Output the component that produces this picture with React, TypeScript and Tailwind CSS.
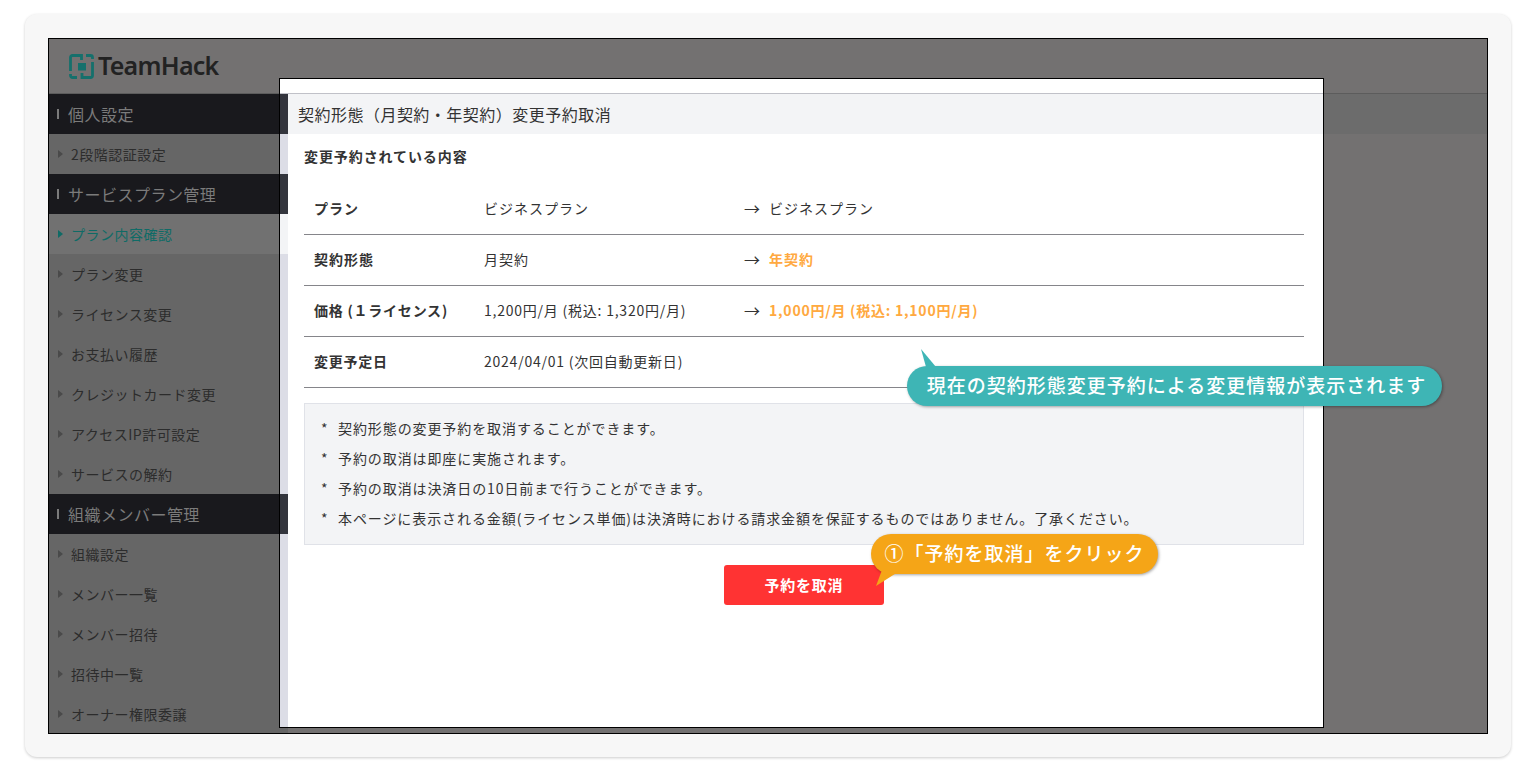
import type { ReactNode } from 'react';

const jp = "font-['Noto_Sans_CJK_JP','Noto_Sans',sans-serif]";

type NavEntry = { label: string; kind: 'section' | 'item' | 'active' };

const NAV: NavEntry[] = [
  { label: '個人設定', kind: 'section' },
  { label: '2段階認証設定', kind: 'item' },
  { label: 'サービスプラン管理', kind: 'section' },
  { label: 'プラン内容確認', kind: 'active' },
  { label: 'プラン変更', kind: 'item' },
  { label: 'ライセンス変更', kind: 'item' },
  { label: 'お支払い履歴', kind: 'item' },
  { label: 'クレジットカード変更', kind: 'item' },
  { label: 'アクセスIP許可設定', kind: 'item' },
  { label: 'サービスの解約', kind: 'item' },
  { label: '組織メンバー管理', kind: 'section' },
  { label: '組織設定', kind: 'item' },
  { label: 'メンバー一覧', kind: 'item' },
  { label: 'メンバー招待', kind: 'item' },
  { label: '招待中一覧', kind: 'item' },
  { label: 'オーナー権限委譲', kind: 'item' },
];

const NOTES = [
  '契約形態の変更予約を取消することができます。',
  '予約の取消は即座に実施されます。',
  '予約の取消は決済日の10日前まで行うことができます。',
  '本ページに表示される金額(ライセンス単価)は決済時における請求金額を保証するものではありません。了承ください。',
];

function Logo() {
  return (
    <svg width="25" height="25" viewBox="0 0 25 25" className="shrink-0">
      <g fill="none" stroke="#15706c" strokeWidth="2.800">
        <path d="M1.500 17V3.500a2 2 0 0 1 2-2H12.500V6" />
        <path d="M17 1.500h4.500a2 2 0 0 1 2 2V5" />
        <path d="M23.500 8v13.500a2 2 0 0 1-2 2H13V19" />
        <path d="M8 23.500H3.500a2 2 0 0 1-2-2V20" />
      </g>
      <rect x="9" y="9" width="8" height="7.500" fill="#15706c" />
    </svg>
  );
}

function NavRow({ entry }: { entry: NavEntry }) {
  if (entry.kind === 'section') {
    return (
      <div className="flex h-10 shrink-0 items-center bg-[#19191d] pl-2 text-base tracking-[0.03em] text-[#7b7b7b]">
        <span className="mr-2 h-2.5 w-0.5 bg-[#7b7b7b]" />
        <span className="pl-[1px]">{entry.label}</span>
      </div>
    );
  }
  const active = entry.kind === 'active';
  return (
    <div
      className={`flex h-10 shrink-0 items-center pb-px pl-[9px] text-sm tracking-[0.035em] ${
        active ? 'bg-[#717171] text-[#0f6b66]' : 'bg-[#666666] text-[#2c2c2c]'
      }`}
    >
      <span
        className={`mr-[8px] h-0 w-0 border-y-[4.500px] border-l-[5px] border-y-transparent ${
          active ? 'border-l-[#0f6b66]' : 'border-l-[#4a4a4a]'
        }`}
      />
      {entry.label}
    </div>
  );
}

function Row({
  label,
  from,
  to,
  highlight,
  mixed,
  last,
}: {
  label: string;
  from: string;
  to?: string;
  highlight?: boolean;
  mixed?: boolean;
  last?: boolean;
}) {
  return (
    <div
      className={`flex h-[51px] items-center border-b border-[#85858a] pb-0.5 pl-2.5 text-sm text-[#333333] ${
        mixed ? 'tracking-[0.055em]' : 'tracking-[0.07em]'
      }`}
    >
      <div className="w-[170px] font-bold">{label}</div>
      <div className="w-[260px]">{from}</div>
      {!last && (
        <div className="flex items-center">
          <span className="w-[25px] text-base tracking-normal">→</span>
          <span className={highlight ? 'font-bold text-[#ffa940]' : ''}>{to}</span>
        </div>
      )}
    </div>
  );
}

function Bubble({ className, children }: { className: string; children: ReactNode }) {
  return (
    <div
      className={`absolute z-10 flex h-10 items-center justify-center rounded-[20px] pb-0.5 text-[19px] font-medium tracking-[1px] whitespace-nowrap text-white shadow-[1px_1px_3px_rgba(0,0,0,0.35)] ${className}`}
    >
      {children}
    </div>
  );
}

export default function App() {
  const strip = [
    'bg-[#33353d] h-10',
    'bg-[#dcdde6] h-10',
    'bg-[#33353d] h-10',
    'bg-[#f3f4f6] h-10',
    'bg-[#dcdde6] h-[240px]',
    'bg-[#33353d] h-10',
    'bg-[#dcdde6] flex-1',
  ];

  return (
    <div className={`h-[771px] w-[1536px] overflow-hidden bg-white pt-3.5 pl-[25px] ${jp}`}>
      <div className="h-[743px] w-[1486px] rounded-xl bg-[#f7f7f7] px-[23px] pt-6 shadow-[0_1px_3px_rgba(0,0,0,0.2)]">
        {/* dimmed app behind the modal */}
        <div className="relative flex h-[696px] w-[1440px] flex-col overflow-hidden border border-black bg-[#737171]">
          <div className="flex h-[55px] shrink-0 items-center gap-[4px] border-b border-[#5c5c5c] pl-5">
            <Logo />
            <span className="font-['Noto_Sans',sans-serif] text-[25px] font-semibold tracking-[-0.03em] text-[#222222]">
              TeamHack
            </span>
          </div>
          <div className="flex min-h-0 flex-1">
            <div className="flex w-[239px] shrink-0 flex-col overflow-hidden">
              {NAV.map(n => (
                <NavRow key={n.label} entry={n} />
              ))}
            </div>
            <div className="h-10 flex-1 bg-[#6c6c6c]" />
          </div>

          {/* highlighted modal */}
          <div className="absolute top-[39px] left-[230px] flex h-[650px] w-[1045px] flex-col border border-black bg-white">
            <div className="h-[15px] shrink-0 border-b border-[#c0c1c8]" />
            <div className="flex min-h-0 flex-1">
              <div className="flex w-2 shrink-0 flex-col">
                {strip.map((c, i) => (
                  <div key={i} className={c} />
                ))}
              </div>
              <div className="flex min-w-0 flex-1 flex-col">
                <div className="flex h-10 items-center bg-[#f3f4f6] pl-2.5 text-base tracking-[0.03em] text-[#333333]">
                  契約形態（月契約・年契約）変更予約取消
                </div>
                <div className="pr-[19px] pl-4">
                  <div className="flex h-[50px] items-start pt-3 text-sm font-bold tracking-[0.065em] text-[#333333]">
                    変更予約されている内容
                  </div>
                  <Row label="プラン" from="ビジネスプラン" to="ビジネスプラン" />
                  <Row label="契約形態" from="月契約" to="年契約" highlight />
                  <Row
                    label="価格 (１ライセンス)"
                    from="1,200円/月 (税込: 1,320円/月)"
                    to="1,000円/月 (税込: 1,100円/月)"
                    highlight
                    mixed
                  />
                  <Row label="変更予定日" from="2024/04/01 (次回自動更新日)" mixed last />
                  <div className="mt-[15px] flex h-[142px] flex-col justify-center border border-[#e0e2e8] bg-[#f3f4f6] pb-0.5 pl-4">
                    {NOTES.map(n => (
                      <div key={n} className="flex h-[30px] items-center text-sm tracking-[0.065em] text-[#333333]">
                        <span className="w-[17px]">*</span>
                        {n}
                      </div>
                    ))}
                  </div>
                  <div className="mt-5 flex justify-center">
                    <div className="flex h-10 w-40 items-center justify-center rounded-[3px] bg-[#ff3333] text-[15px] font-bold tracking-[0.05em] text-white">
                      予約を取消
                    </div>
                  </div>
                </div>
              </div>
            </div>
          </div>

          <Bubble className="top-[327px] left-[858px] w-[535px] bg-[#3eb5b5] pl-1">
            <svg width="20" height="20" viewBox="0 0 20 20" className="absolute top-[-17px] left-[12px]">
              <path d="M2 0L7 18H17Z" fill="#3eb5b5" />
            </svg>
            現在の契約形態変更予約による変更情報が表示されます
          </Bubble>
          <Bubble className="top-[495px] left-[822px] w-[287px] bg-[#f5a517]">
            <svg width="30" height="20" viewBox="0 0 30 20" className="absolute top-[32px] left-[3px]">
              <path d="M2 20L8 4L24 6Z" fill="#f5a517" />
            </svg>
            ①「予約を取消」をクリック
          </Bubble>
        </div>
      </div>
    </div>
  );
}
